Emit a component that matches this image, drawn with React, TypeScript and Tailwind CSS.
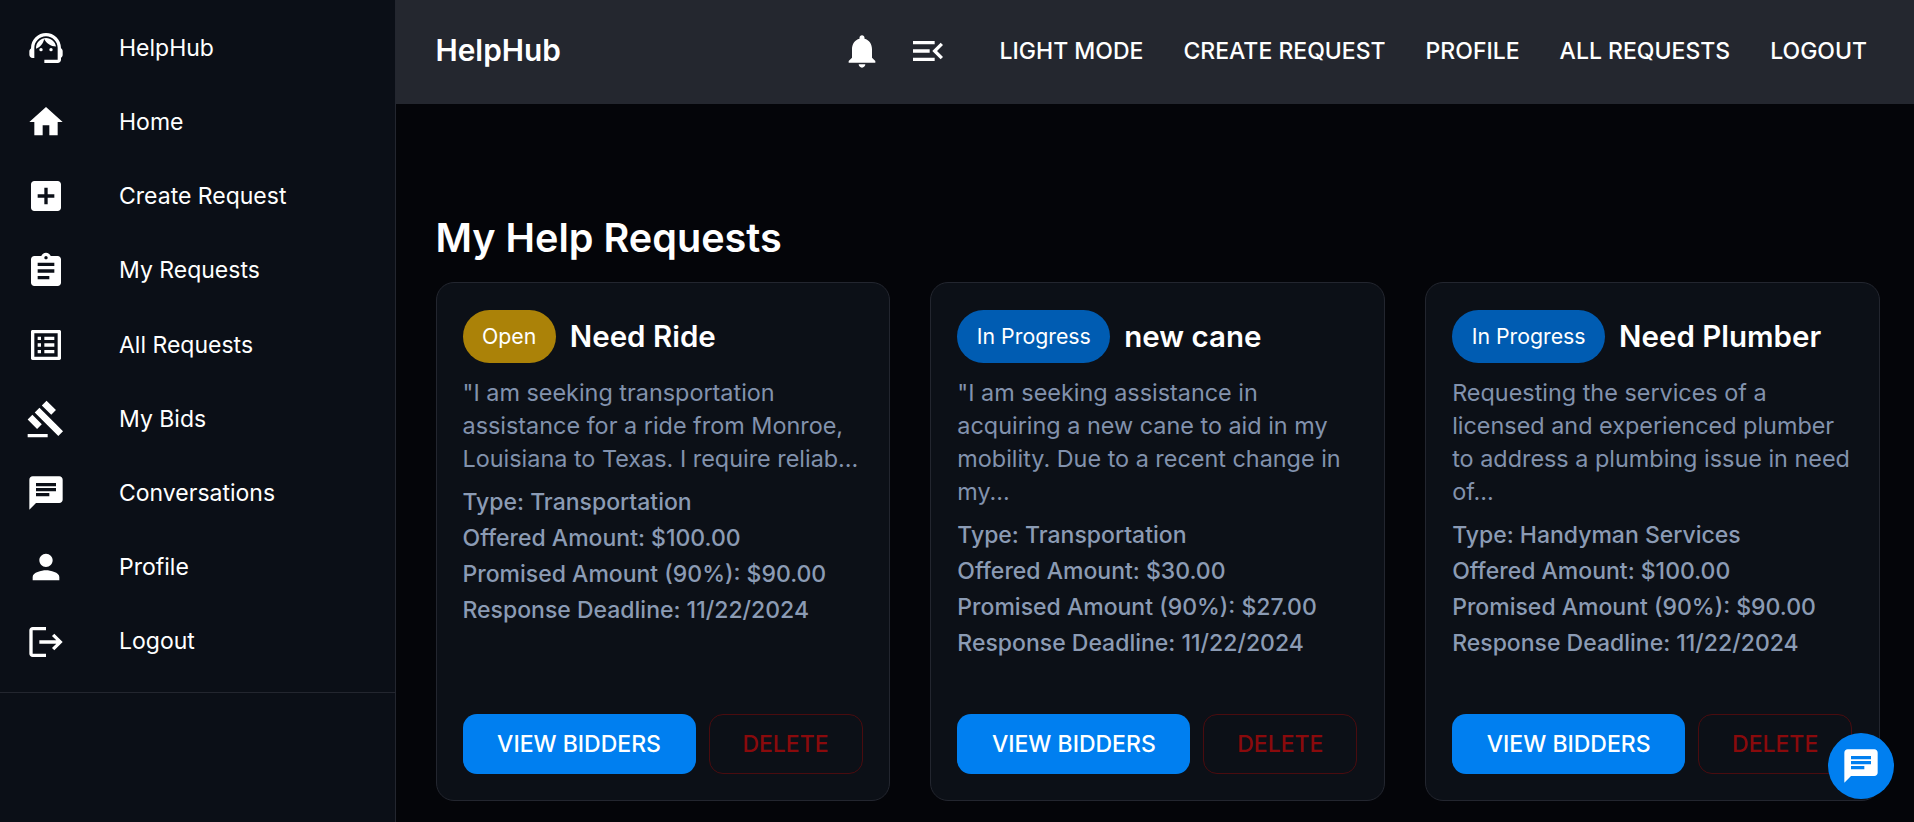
import type { ReactNode } from 'react';

const Icon = ({ children, className = 'h-10 w-10' }: { children: ReactNode; className?: string }) => (
  <svg viewBox="0 0 24 24" fill="currentColor" className={className}>{children}</svg>
);

const navItems: { label: string; icon: ReactNode }[] = [
  {
    label: 'HelpHub',
    icon: (
      <>
        <path d="M21 12.22C21 6.73 16.74 3 12 3c-4.69 0-9 3.65-9 9.28-.6.34-1 .98-1 1.72v2c0 1.1.9 2 2 2h1v-6.1c0-3.87 3.13-7 7-7s7 3.13 7 7V19h-8v2h8c1.1 0 2-.9 2-2v-1.22c.59-.31 1-.92 1-1.61v-2.3c0-.67-.41-1.28-1-1.65z" />
        <circle cx="9" cy="13" r="1" />
        <circle cx="15" cy="13" r="1" />
        <path d="M18 11.03C17.52 8.18 15.04 6 12.05 6c-3.03 0-6.29 2.51-6.03 6.45 2.47-1.01 4.33-3.21 4.86-5.89 1.31 2.63 4 4.44 7.12 4.47z" />
      </>
    ),
  },
  { label: 'Home', icon: <path d="M10 20v-6h4v6h5v-8h3L12 3 2 12h3v8z" /> },
  { label: 'Create Request', icon: <path d="M19 3H5c-1.11 0-2 .9-2 2v14c0 1.1.89 2 2 2h14c1.1 0 2-.9 2-2V5c0-1.1-.9-2-2-2zm-2 10h-4v4h-2v-4H7v-2h4V7h2v4h4v2z" /> },
  { label: 'My Requests', icon: <path d="M19 3h-4.18C14.4 1.84 13.3 1 12 1c-1.3 0-2.4.84-2.82 2H5c-1.1 0-2 .9-2 2v14c0 1.1.9 2 2 2h14c1.1 0 2-.9 2-2V5c0-1.1-.9-2-2-2zm-7 0c.55 0 1 .45 1 1s-.45 1-1 1-1-.45-1-1 .45-1 1-1zm2 14H7v-2h7v2zm3-4H7v-2h10v2zm0-4H7V7h10v2z" /> },
  { label: 'All Requests', icon: <path d="M19 5v14H5V5h14m1.1-2H3.9c-.5 0-.9.4-.9.9v16.2c0 .4.4.9.9.9h16.2c.4 0 .9-.5.9-.9V3.9c0-.5-.5-.9-.9-.9zM11 7h6v2h-6V7zm0 4h6v2h-6v-2zm0 4h6v2h-6zM7 7h2v2H7zm0 4h2v2H7zm0 4h2v2H7z" /> },
  { label: 'My Bids', icon: <path d="M1 21h12v2H1zM5.245 8.07l2.83-2.827 14.14 14.142-2.828 2.828zM12.317 1l5.657 5.656-2.83 2.83-5.654-5.66zM3.825 9.485l5.657 5.657-2.828 2.828-5.657-5.657z" /> },
  { label: 'Conversations', icon: <path d="M20 2H4c-1.1 0-1.99.9-1.99 2L2 22l4-4h14c1.1 0 2-.9 2-2V4c0-1.1-.9-2-2-2zM6 9h12v2H6V9zm8 5H6v-2h8v2zm4-6H6V6h12v2z" /> },
  { label: 'Profile', icon: <path d="M12 12c2.21 0 4-1.79 4-4s-1.79-4-4-4-4 1.79-4 4 1.79 4 4 4zm0 2c-2.67 0-8 1.34-8 4v2h16v-2c0-2.66-5.33-4-8-4z" /> },
  { label: 'Logout', icon: <path d="M17 7l-1.41 1.41L18.17 11H8v2h10.17l-2.58 2.58L17 17l5-5zM4 5h8V3H4c-1.1 0-2 .9-2 2v14c0 1.1.9 2 2 2h8v-2H4V5z" /> },
];

const requests = [
  {
    status: 'Open',
    chip: 'bg-[#ab8208]',
    title: 'Need Ride',
    text: '"I am seeking transportation assistance for a ride from Monroe, Louisiana to Texas. I require reliab...',
    type: 'Transportation',
    offered: '$100.00',
    promised: '$90.00',
  },
  {
    status: 'In Progress',
    chip: 'bg-[#005cb2]',
    title: 'new cane',
    text: '"I am seeking assistance in acquiring a new cane to aid in my mobility. Due to a recent change in my...',
    type: 'Transportation',
    offered: '$30.00',
    promised: '$27.00',
  },
  {
    status: 'In Progress',
    chip: 'bg-[#005cb2]',
    title: 'Need Plumber',
    text: 'Requesting the services of a licensed and experienced plumber to address a plumbing issue in need of...',
    type: 'Handyman Services',
    offered: '$100.00',
    promised: '$90.00',
  },
];

export default function App() {
  return (
    <div className="flex h-screen overflow-hidden bg-[#040509] font-['Inter',sans-serif] text-white">
      <aside className="w-[396px] shrink-0 border-r border-[#23262f] bg-[#0b0f17]">
        <nav className="border-b border-[#23262f] pt-[11px] pb-[13px]">
          {navItems.map((item) => (
            <div key={item.label} className="flex h-[74.2px] items-center gap-[53px] pl-[26px] text-[23px]">
              <Icon>{item.icon}</Icon>
              <span>{item.label}</span>
            </div>
          ))}
        </nav>
      </aside>

      <div className="flex min-w-0 flex-1 flex-col">
        <header className="flex h-[104px] shrink-0 items-center justify-between bg-[#24272f] pr-[47px] pb-[2px] pl-[39.5px]">
          <span className="mb-[2px] text-[29.8px] font-semibold">HelpHub</span>
          <div className="flex items-center">
            <Icon className="mr-[26px] h-10 w-10"><path d="M12 22c1.1 0 2-.9 2-2h-4c0 1.1.89 2 2 2zm6-6v-5c0-3.07-1.64-5.64-4.5-6.32V4c0-.83-.67-1.5-1.5-1.5s-1.5.67-1.5 1.5v.68C7.63 5.36 6 7.92 6 11v5l-2 2v1h16v-1l-2-2z" /></Icon>
            <Icon className="mr-[52px] h-10 w-10"><path d="M3 18h13v-2H3v2zm0-5h10v-2H3v2zm0-7v2h13V6H3zm18 9.59L17.42 12 21 8.41 19.59 7l-5 5 5 5L21 15.59z" /></Icon>
            <div className="flex gap-10 text-[23px] font-medium">
              <span>LIGHT MODE</span>
              <span>CREATE REQUEST</span>
              <span>PROFILE</span>
              <span>ALL REQUESTS</span>
              <span>LOGOUT</span>
            </div>
          </div>
        </header>

        <main className="pt-[110px] pr-[34px] pl-[39.5px]">
          <h1 className="mb-[20px] text-[39.6px] leading-[48px] font-semibold">My Help Requests</h1>
          <div className="grid grid-cols-3 gap-10">
            {requests.map((r) => (
              <article key={r.title} className="flex h-[519px] flex-col rounded-[18px] border border-[#23262f] bg-[#0c1017] px-[26px] pt-[27px] pb-[26px]">
                <div className="mb-[13px] flex items-center gap-[14px]">
                  <span className={`flex h-[53px] items-center rounded-full px-[19.5px] text-[21.3px] ${r.chip}`}>{r.status}</span>
                  <h2 className="text-[29.5px] font-semibold">{r.title}</h2>
                </div>
                <p className="mb-[9px] text-[23.4px] leading-[33px] text-[#8292ad]">{r.text}</p>
                <div className="text-[23px] leading-[36px] font-medium text-[#8b9bb4]">
                  <p>Type: {r.type}</p>
                  <p>Offered Amount: {r.offered}</p>
                  <p>Promised Amount (90%): {r.promised}</p>
                  <p>Response Deadline: 11/22/2024</p>
                </div>
                <div className="mt-auto flex gap-[13px]">
                  <button className="h-[60px] w-[233px] rounded-[14px] bg-[#007ff0] text-[23px] font-medium text-white">VIEW BIDDERS</button>
                  <button className="h-[60px] w-[154px] rounded-[14px] border border-[#4a0c0f] text-[23px] font-medium text-[#8a0a0c]">DELETE</button>
                </div>
              </article>
            ))}
          </div>
        </main>
      </div>

      <button className="absolute right-5 bottom-[23px] flex h-[66px] w-[66px] items-center justify-center rounded-full bg-[#007ff0]">
        <Icon><path d="M20 2H4c-1.1 0-1.99.9-1.99 2L2 22l4-4h14c1.1 0 2-.9 2-2V4c0-1.1-.9-2-2-2zM6 9h12v2H6V9zm8 5H6v-2h8v2zm4-6H6V6h12v2z" /></Icon>
      </button>
    </div>
  );
}
